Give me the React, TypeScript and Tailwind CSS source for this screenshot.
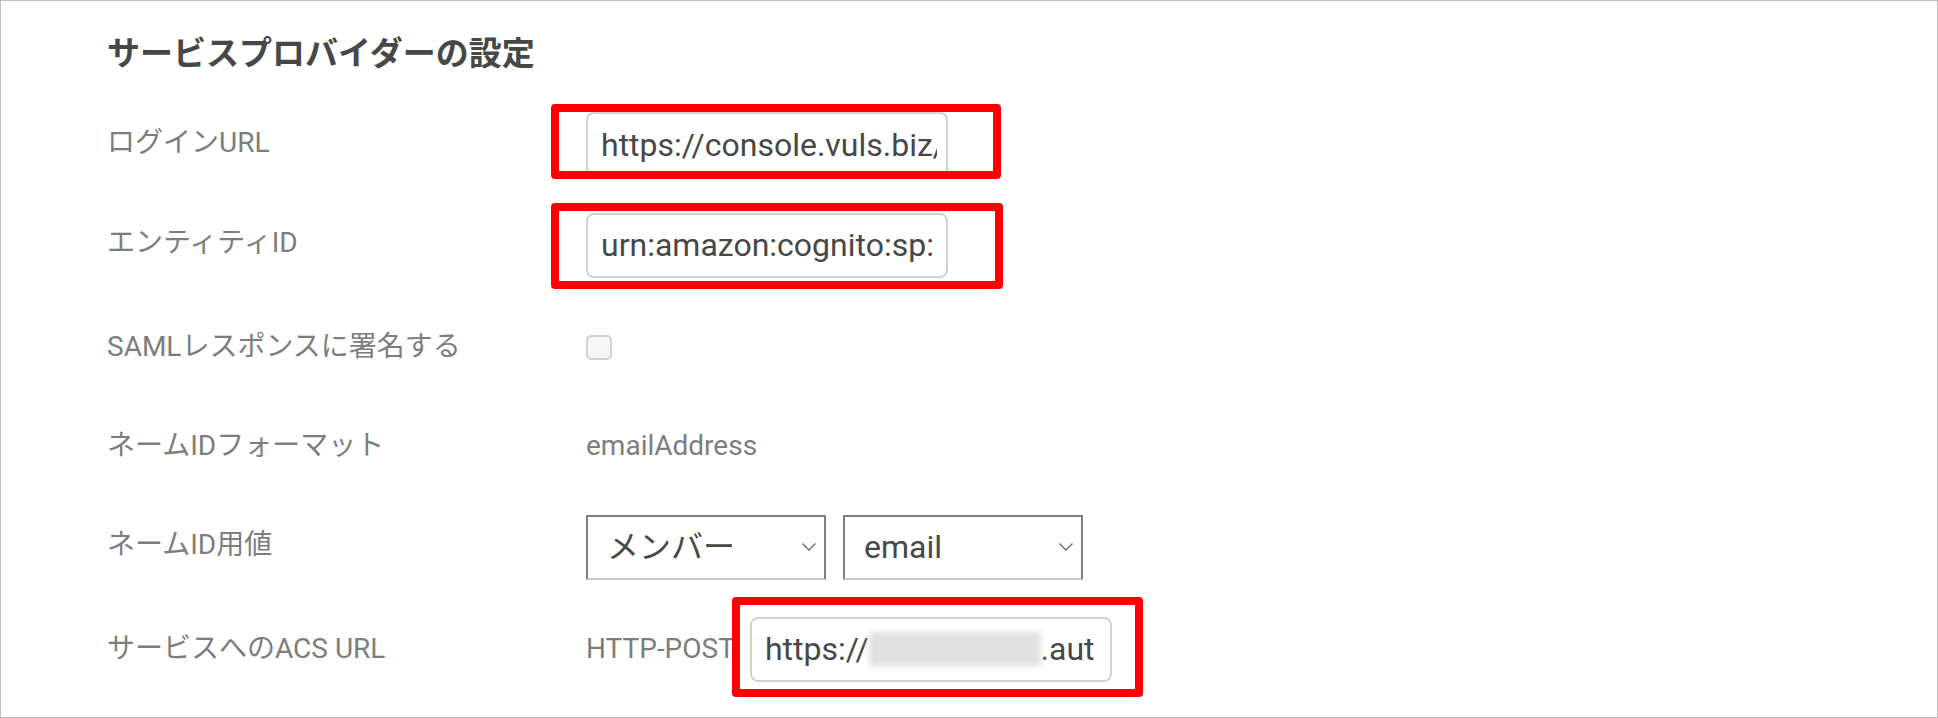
import React from 'react';

const labelCls = 'w-[479px] shrink-0 text-[28px] text-[#7d7d7d]';

function TextBox({ children, className = '' }: { children: React.ReactNode; className?: string }) {
  return (
    <div
      className={`h-[65px] w-[362px] flex items-center rounded-[8px] border-2 border-[#d2d2d2] bg-white pl-[13px] pr-[9px] text-[32px] text-[#474747] ${className}`}
    >
      <div className="flex min-w-0 flex-1 items-center overflow-hidden whitespace-nowrap">{children}</div>
    </div>
  );
}

function Chevron() {
  return (
    <svg width="16" height="10" viewBox="0 0 16 10" fill="none" className="shrink-0">
      <polyline points="1.5,1.5 8,8 14.5,1.5" stroke="#6b6b6b" strokeWidth="1.4" />
    </svg>
  );
}

function SelectBox({ value }: { value: string }) {
  return (
    <div className="w-[240px] h-[65px] flex items-center justify-between border-2 border-[#7f7f7f] border-b-[#c6c6c6] bg-white pl-[19px] pr-[7px] text-[32px] text-[#474747]">
      <span>{value}</span>
      <Chevron />
    </div>
  );
}

function RedFrame({ className }: { className: string }) {
  return <div className={`pointer-events-none absolute rounded-[4px] border-[8px] border-[#ff0000] ${className}`} />;
}

export default function App() {
  return (
    <div className="w-[1938px] h-[718px] border border-[#bdbdbd] bg-white font-['Roboto','Noto_Sans_CJK_JP',sans-serif]">
      <div className="pl-[106px]">
        <div className="h-[92px] pt-[29px]">
          <h2 className="text-[33px] leading-[48px] font-bold text-[#474747]">サービスプロバイダーの設定</h2>
        </div>

        {/* ログインURL */}
        <div className="h-[100px] flex items-center">
          <div className={labelCls}>ログインURL</div>
          <div className="relative mt-[3px]">
            <TextBox>https://console.vuls.biz/</TextBox>
            <RedFrame className="-left-[35px] -top-[8px] w-[450px] h-[75px]" />
          </div>
        </div>

        {/* エンティティID */}
        <div className="h-[100px] flex items-center">
          <div className={labelCls}>エンティティID</div>
          <div className="relative mt-[4px]">
            <TextBox>urn:amazon:cognito:sp:</TextBox>
            <RedFrame className="-left-[35px] -top-[10px] w-[452px] h-[86px]" />
          </div>
        </div>

        {/* SAML */}
        <div className="h-[108px] flex items-center">
          <div className={labelCls}>SAMLレスポンスに署名する</div>
          <div className="h-[25px] w-[26px] rounded-[5px] border-2 border-[#d2d2d2] bg-[#f6f6f6]" />
        </div>

        {/* ネームIDフォーマット */}
        <div className="h-[90px] flex items-center">
          <div className={labelCls}>ネームIDフォーマット</div>
          <div className="text-[28px] text-[#7d7d7d]">emailAddress</div>
        </div>

        {/* ネームID用値 */}
        <div className="h-[108px] flex items-center">
          <div className={labelCls}>ネームID用値</div>
          <div className="mt-[4px] flex gap-[17px]">
            <SelectBox value="メンバー" />
            <SelectBox value="email" />
          </div>
        </div>

        {/* ACS URL */}
        <div className="h-[100px] flex items-center">
          <div className={labelCls}>サービスへのACS URL</div>
          <div className="flex items-center gap-[15px]">
            <span className="text-[28px] text-[#7d7d7d]">HTTP-POST</span>
            <div className="relative">
              <TextBox className="w-[360px]">
                <span>https://</span>
                <span className="inline-block h-[34px] w-[172px] shrink-0 bg-[#e0e0e0] blur-[3px]" />
                <span>.aut</span>
              </TextBox>
              <RedFrame className="-left-[18px] -top-[20px] w-[411px] h-[100px]" />
            </div>
          </div>
        </div>
      </div>
    </div>
  );
}
